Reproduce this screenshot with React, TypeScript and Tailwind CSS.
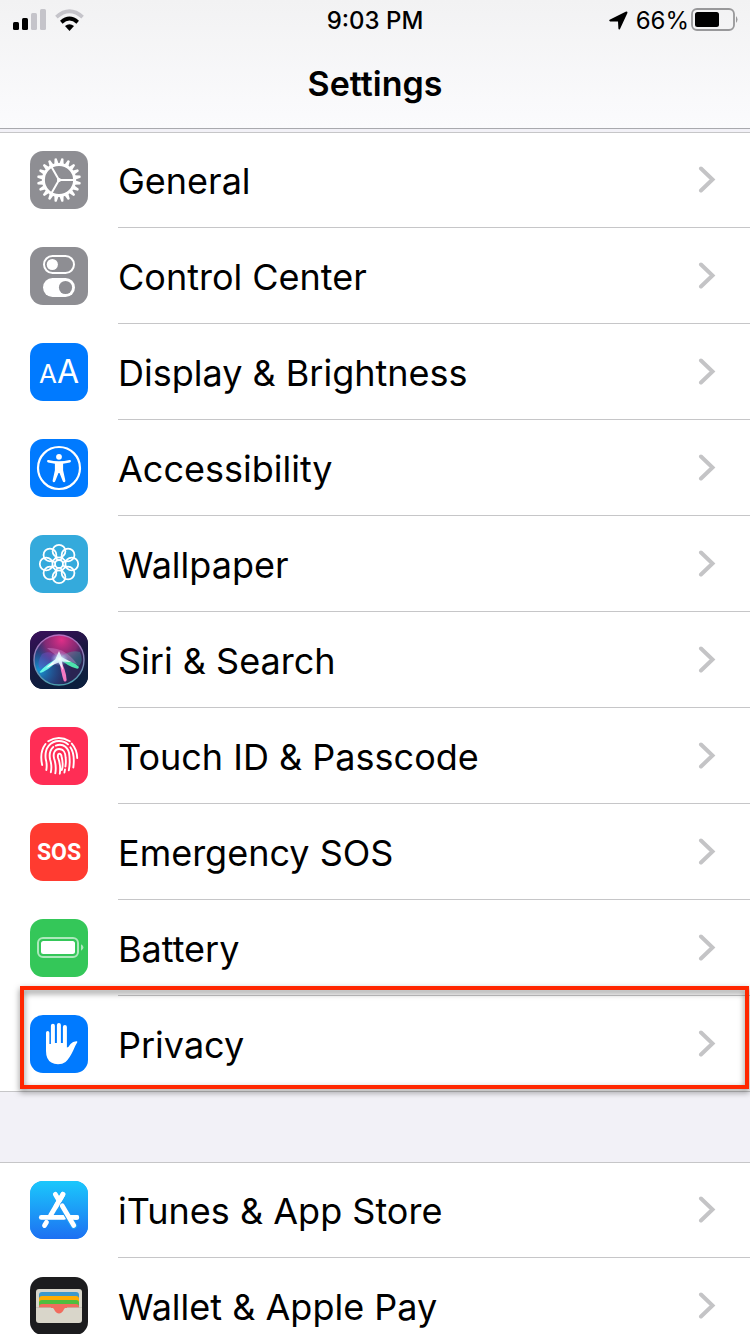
import type { ReactNode } from "react";

const angles = (count: number) => Array.from({ length: count }, (_, i) => (i * 360) / count);

function Glyph({ children }: { children: ReactNode }) {
  return (
    <svg viewBox="0 0 58 58" className="size-full" fill="none" aria-hidden="true">
      {children}
    </svg>
  );
}

function GearIcon() {
  return (
    <Glyph>
      <circle cx="29" cy="29" r="15.6" stroke="#fff" strokeWidth="3" />
      {angles(20).map((a) => (
        <path key={a} d="M26.8 13.2 27.9 7.4Q29 6.6 30.1 7.4L31.2 13.2z" fill="#fff" transform={`rotate(${a + 9} 29 29)`} />
      ))}
      <path d="M29 29H45M29 29 21 15.1M29 29 21 42.9" stroke="#fff" strokeWidth="2" />
      <circle cx="29" cy="29" r="2" fill="#fff" />
    </Glyph>
  );
}

function TogglesIcon() {
  return (
    <Glyph>
      <rect x="14" y="9" width="30" height="17" rx="8.5" stroke="#fff" strokeWidth="2" />
      <circle cx="22.3" cy="17.5" r="5.6" fill="#fff" />
      <rect x="13" y="31" width="32" height="19" rx="9.5" fill="#fff" />
      <circle cx="35.5" cy="40.5" r="6.6" fill="#8e8e93" />
    </Glyph>
  );
}

function LettersIcon() {
  return (
    <span className="flex items-baseline leading-none text-white" aria-hidden="true">
      <span className="text-[26px]">A</span>
      <span className="text-[32px]">A</span>
    </span>
  );
}

function AccessibilityIcon() {
  return (
    <Glyph>
      <circle cx="29" cy="29" r="21" stroke="#fff" strokeWidth="2.2" />
      <circle cx="29" cy="17.8" r="2.9" fill="#fff" />
      <path
        d="M18.4 21.1Q29 23.6 39.6 21.1Q40.8 21 41 22.1Q41 23.1 40 23.4L33.1 24.8V31.3L35.4 41.8Q35.4 43 34.4 43.3Q33.2 43.4 32.8 42.3L29.5 34H28.5L25.2 42.3Q24.8 43.4 23.6 43.3Q22.6 43 22.6 41.8L24.9 31.3V24.8L18 23.4Q17 23.1 17 22.1Q17.2 21 18.4 21.1z"
        fill="#fff"
      />
    </Glyph>
  );
}

function FlowerIcon() {
  return (
    <Glyph>
      <g stroke="#fff" strokeWidth="1.8">
        {angles(8).map((a) => (
          <circle key={a} cx="29" cy="16.2" r="6.4" transform={`rotate(${a} 29 29)`} />
        ))}
        {angles(8).map((a) => (
          <path key={a} d="M29 25V21.5" transform={`rotate(${a + 22.5} 29 29)`} />
        ))}
        <circle cx="29" cy="29" r="4" />
      </g>
    </Glyph>
  );
}

function SiriIcon() {
  return (
    <Glyph>
      <defs>
        <linearGradient id="siri-bg" x1="0" y1="0" x2="0.3" y2="1">
          <stop offset="0" stopColor="#3b0f5c" />
          <stop offset="0.5" stopColor="#1b1740" />
          <stop offset="1" stopColor="#0c1f3e" />
        </linearGradient>
        <radialGradient id="siri-pink" cx="0.55" cy="0.1" r="0.55">
          <stop offset="0" stopColor="#e02f88" />
          <stop offset="0.6" stopColor="#a02a7c" stopOpacity="0.75" />
          <stop offset="1" stopColor="#5a2a80" stopOpacity="0" />
        </radialGradient>
        <radialGradient id="siri-blue" cx="0.1" cy="0.7" r="0.65">
          <stop offset="0" stopColor="#1597d4" />
          <stop offset="1" stopColor="#2547a0" stopOpacity="0" />
        </radialGradient>
        <radialGradient id="siri-glow">
          <stop offset="0" stopColor="#fff" />
          <stop offset="0.4" stopColor="#cdf6ff" stopOpacity="0.6" />
          <stop offset="1" stopColor="#8ab8ff" stopOpacity="0" />
        </radialGradient>
        <linearGradient id="siri-ring" x1="0" y1="0" x2="0" y2="1">
          <stop offset="0" stopColor="#b56bbd" />
          <stop offset="1" stopColor="#4b9fae" />
        </linearGradient>
        <filter id="siri-soft" x="-20%" y="-20%" width="140%" height="140%">
          <feGaussianBlur stdDeviation="0.6" />
        </filter>
      </defs>
      <rect width="58" height="58" fill="url(#siri-bg)" />
      <circle cx="29" cy="29" r="25" fill="#2a2452" />
      <circle cx="29" cy="29" r="25" fill="url(#siri-blue)" />
      <circle cx="29" cy="29" r="25" fill="url(#siri-pink)" />
      <g filter="url(#siri-soft)">
        <path d="M29 27Q40 18 50 21Q54 30 49 35z" fill="#3e9fa5" fillOpacity="0.4" />
        <path d="M29 27Q20 18 12 23Q6 32 10 38z" fill="#7054cf" fillOpacity="0.4" />
        <path d="M17 17Q35 16 47 33L29 27z" fill="#df9ee4" fillOpacity="0.35" />
        <path d="M9.5 41Q17 32 29 27Q23 36 13 41Q10 42.5 9.5 41z" fill="#66f5e9" />
        <path d="M29 27Q42 29.5 48.5 35.5Q49.5 38 46.5 37.6Q37 35 29 27z" fill="#4de3ac" />
        <path d="M29 27Q36 38 36.6 49Q36 51.5 33.8 50Q31 42 29 27z" fill="#f57ac3" />
        <path d="M29 20 31.5 26 41 31 32 30.5 33 39 28.5 31.5 16 37 25.5 28z" fill="#fff" fillOpacity="0.9" />
      </g>
      <ellipse cx="29.5" cy="28" rx="9" ry="7" fill="url(#siri-glow)" />
      <circle cx="29" cy="29" r="25" stroke="url(#siri-ring)" strokeWidth="1.4" />
    </Glyph>
  );
}

function FingerprintIcon() {
  return (
    <Glyph>
      <g stroke="#fff" strokeWidth="1.9" strokeLinecap="round">
        <path d="M18.2 14.3Q28.5 7.6 39.8 14.3" />
        <path d="M15.5 17Q9.3 25 12.2 38" />
        <path d="M41.8 16.6Q47 22.5 47.2 31" />
        <path d="M16.3 43Q17.3 37.5 15.7 32C14.3 21 20.5 14 29 14Q34.5 14 38 17.4" />
        <path d="M40.4 20.2Q45.1 27 43.3 40.5" />
        <path d="M20.8 45.2Q22.2 39 20.1 32.5Q18.4 24.3 23.3 20" />
        <path d="M25.8 18.6C33.5 15.5 39.2 21.3 39.4 29Q40.2 37 38.8 43.4" />
        <path d="M25.3 46.3Q26.6 39 24.1 31.5C22.6 25.8 25.3 22 29 22C33.7 22 35.6 26.3 35.6 30.4Q36.2 35 35.4 39.5" />
        <path d="M35 42.4 34.4 45.6" />
        <path d="M29.8 46.7Q31 38.5 28 30.5Q27.4 27.1 29.2 26.6Q31.1 26.4 31.6 29.5Q33.6 38 31.8 43" />
      </g>
    </Glyph>
  );
}

function SosIcon() {
  return (
    <span className="font-['Roboto',sans-serif] text-[23px] leading-none font-bold text-white" aria-hidden="true">
      SOS
    </span>
  );
}

function BatteryIcon() {
  return (
    <Glyph>
      <rect x="8" y="19" width="40" height="19" rx="5" stroke="#fff" strokeOpacity="0.6" strokeWidth="2" />
      <rect x="11" y="22" width="34" height="13" rx="2.5" fill="#fff" />
      <path d="M51 25.3Q56 28.5 51 31.8z" fill="#fff" fillOpacity="0.6" />
    </Glyph>
  );
}

function HandIcon() {
  return (
    <Glyph>
      <path
        d="M16 17.8a1.7 1.7 0 0 1 3.4 0V29h1.5V10.7a2 2 0 0 1 4 0V28h2V10a2 2 0 0 1 4 0v18h2V12a2 2 0 0 1 4 0V32.5Q38.5 32.5 40.5 29Q43 26 47 26.3Q47.8 26.8 47 27.8Q45 31 43.2 35.5Q39.5 43.5 35.5 47Q32.5 49.2 28 49.2Q20 49 17.3 43Q16 39.8 16 36z"
        fill="#fff"
      />
    </Glyph>
  );
}

function StoreIcon() {
  return (
    <Glyph>
      <defs>
        <linearGradient id="store-bg" x1="0" y1="0" x2="0" y2="1">
          <stop offset="0" stopColor="#1bc8fc" />
          <stop offset="1" stopColor="#1d70f2" />
        </linearGradient>
      </defs>
      <rect width="58" height="58" fill="url(#store-bg)" />
      <g stroke="#fff" strokeWidth="4.8" strokeLinecap="round">
        <path d="M25.3 13.3 29 19.5" />
        <path d="M11.3 36.4H34" />
        <path d="M40 36.4H46.7" />
        <path d="M16.5 41.3 14.5 44.6" />
        <path d="M33 13.3 20.5 34.5" />
      </g>
      <path d="M32 24.5 43.8 44.5" stroke="#1f9cf7" strokeWidth="7" strokeLinecap="round" />
      <path d="M40 36.4H46.7M32.2 24.8 43.8 44.5" stroke="#fff" strokeWidth="4.8" strokeLinecap="round" />
      <path d="M33 13.3 26 25.2" stroke="#fff" strokeWidth="4.8" strokeLinecap="round" />
    </Glyph>
  );
}

function WalletIcon() {
  return (
    <Glyph>
      <rect x="6" y="12" width="46" height="34" rx="3" fill="#d9d6ca" />
      <path d="M9 18Q9 15 12 15H46Q49 15 49 18V31H9z" fill="#3d98ca" />
      <path d="M9 22Q9 19 12 19H46Q49 19 49 22V31H9z" fill="#ffad00" />
      <path d="M9 26Q9 23 12 23H46Q49 23 49 26V31H9z" fill="#50bd3e" />
      <path d="M9 30Q9 27 12 27H46Q49 27 49 30V31H9z" fill="#f16c5e" />
      <path d="M9 30H21Q22.8 30 24 32.2Q26.2 36.5 29 36.5T34 32.2Q35.2 30 37 30H49z" fill="#f16c5e" />
      <path d="M6 30.5H21M37 30.5H52" stroke="#bdbbb2" strokeWidth="0.7" />
    </Glyph>
  );
}

type Item = { label: string; tile: string; icon: ReactNode; highlighted?: boolean };

const deviceItems: Item[] = [
  { label: "General", tile: "bg-[#8e8e93]", icon: <GearIcon /> },
  { label: "Control Center", tile: "bg-[#8e8e93]", icon: <TogglesIcon /> },
  { label: "Display & Brightness", tile: "bg-[#007aff]", icon: <LettersIcon /> },
  { label: "Accessibility", tile: "bg-[#007aff]", icon: <AccessibilityIcon /> },
  { label: "Wallpaper", tile: "bg-[#34aadc]", icon: <FlowerIcon /> },
  { label: "Siri & Search", tile: "bg-[#1b1740]", icon: <SiriIcon /> },
  { label: "Touch ID & Passcode", tile: "bg-[#ff2d55]", icon: <FingerprintIcon /> },
  { label: "Emergency SOS", tile: "bg-[#ff3b30]", icon: <SosIcon /> },
  { label: "Battery", tile: "bg-[#34c759]", icon: <BatteryIcon /> },
  { label: "Privacy", tile: "bg-[#007aff]", icon: <HandIcon />, highlighted: true },
];

const storeItems: Item[] = [
  { label: "iTunes & App Store", tile: "bg-[#1d9cf7]", icon: <StoreIcon /> },
  { label: "Wallet & Apple Pay", tile: "bg-[#1c1c1e]", icon: <WalletIcon /> },
];

function SettingsGroup({ items }: { items: Item[] }) {
  return (
    <ul className="border-y border-[#c6c6c8] bg-white">
      {items.map((item) => (
        <li key={item.label} className="group relative first:-mt-px last:-mb-px">
          <a href="#" className="flex h-24 items-center gap-[30px] pl-[30px]">
            <span
              className={`flex size-[58px] shrink-0 items-center justify-center overflow-hidden rounded-[13px] ${item.tile}`}
            >
              {item.icon}
            </span>
            <span className="flex h-full grow items-center justify-between border-b border-[#c6c6c8] pr-[34px] group-last:border-transparent">
              <span className="pt-0.5 text-4xl leading-none">{item.label}</span>
              <svg width="18" height="28" viewBox="0 0 18 28" fill="none" aria-hidden="true">
                <path d="M3 2.5 14.5 13.5 3 24.5" stroke="#c4c4c6" strokeWidth="4" strokeLinecap="round" />
              </svg>
            </span>
          </a>
          {item.highlighted && (
            <span className="pointer-events-none absolute -top-2.5 right-px bottom-[3px] left-5 border-4 border-[#ff2600] drop-shadow-[0_3px_3px_rgba(0,0,0,0.5)]" />
          )}
        </li>
      ))}
    </ul>
  );
}

function StatusBar() {
  return (
    <div className="grid h-10 grid-cols-3 items-center pr-3 pl-3 text-2xl leading-none">
      <div className="flex items-center gap-2">
        <svg width="35" height="24" viewBox="0 0 35 24" role="img" aria-label="Cellular signal">
          <rect x="1" y="14" width="6" height="8" rx="1.5" />
          <rect x="10" y="10" width="6" height="12" rx="1.5" />
          <rect x="19" y="5" width="6" height="17" rx="1.5" fill="#c5c4ca" />
          <rect x="28" y="1" width="6" height="21" rx="1.5" fill="#c5c4ca" />
        </svg>
        <svg width="30" height="24" viewBox="0 0 30 24" fill="none" role="img" aria-label="Wi-Fi">
          <path d="M1.4 9.2Q14.5 -2.5 27.6 9.2" stroke="#c5c4ca" strokeWidth="3.8" />
          <path d="M6.3 14.2Q14.5 7 22.7 14.2" stroke="#000" strokeWidth="3.8" />
          <path d="M10 18Q14.5 14.4 19 18L14.5 23z" fill="#000" />
        </svg>
      </div>
      <time className="pt-0.5 text-center font-medium">9:03 PM</time>
      <div className="flex items-center justify-end">
        <svg width="19" height="19" viewBox="0 0 19 19" className="mr-2" role="img" aria-label="Location in use">
          <path d="M0.6 8.8 16.6 0.7Q19 0 18.3 2.3L11 18Q9.8 19.3 9.4 17.6L9 10.4H1.2Q-0.4 10 0.6 8.8z" />
        </svg>
        <span className="pt-0.5">66%</span>
        <svg width="47" height="24" viewBox="0 0 47 24" fill="none" className="ml-0.5" role="img" aria-label="Battery at 66%">
          <rect x="1" y="1" width="42" height="21" rx="5" stroke="#98989a" strokeWidth="1.8" />
          <rect x="4" y="4" width="24" height="15" rx="2.5" fill="#000" />
          <path d="M45 8Q48 11.5 45 15z" fill="#98989a" />
        </svg>
      </div>
    </div>
  );
}

export default function App() {
  return (
    <div className="h-screen overflow-hidden bg-[#f2f1f7] font-['Inter',sans-serif] text-black">
      <header className="border-b border-[#a9a9ae] bg-linear-to-b from-[#f2f2f3] to-[#fbfbfd]">
        <StatusBar />
        <h1 className="flex h-[88px] items-center justify-center text-[34px] leading-none font-semibold">Settings</h1>
      </header>
      <main className="flex flex-col gap-[70px] pt-[3px]">
        <SettingsGroup items={deviceItems} />
        <SettingsGroup items={storeItems} />
      </main>
    </div>
  );
}
